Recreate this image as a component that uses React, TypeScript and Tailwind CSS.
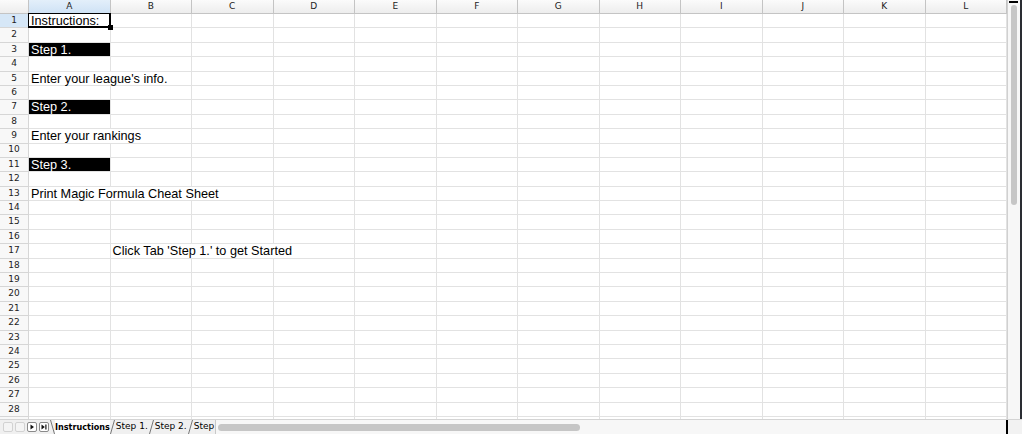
import React from 'react';

const COLS = ['A', 'B', 'C', 'D', 'E', 'F', 'G', 'H', 'I', 'J', 'K', 'L'];
const ROWS = Array.from({ length: 29 }, (_, i) => i + 1);

type Cell = { col: string; text: string; dark?: boolean };

const CELLS: Record<number, Cell> = {
  1: { col: 'A', text: 'Instructions:' },
  3: { col: 'A', text: 'Step 1.', dark: true },
  5: { col: 'A', text: "Enter your league's info." },
  7: { col: 'A', text: 'Step 2.', dark: true },
  9: { col: 'A', text: 'Enter your rankings' },
  11: { col: 'A', text: 'Step 3.', dark: true },
  13: { col: 'A', text: 'Print Magic Formula Cheat Sheet' },
  17: { col: 'B', text: "Click Tab 'Step 1.' to get Started" },
};

const cellFont = { fontFamily: '"Liberation Sans", Helvetica, Arial, sans-serif' };
const uiFont = { fontFamily: '"DejaVu Sans", "Lucida Grande", sans-serif' };

function NavButton({ active, children }: { active?: boolean; children?: React.ReactNode }) {
  return (
    <div
      className={`w-[10px] h-[10px] rounded-[2px] border flex items-center justify-center ${
        active ? 'border-[#8a8a8a] bg-white' : 'border-[#d2d2d2] bg-[#f4f4f4]'
      }`}
    >
      {children}
    </div>
  );
}

function Slant({ back }: { back?: boolean }) {
  return (
    <svg width="5" height="14" viewBox="0 0 5 14" className="shrink-0">
      <line x1={back ? 0.5 : 4.5} y1="0" x2={back ? 4.5 : 0.5} y2="14" stroke="#777" strokeWidth="1" />
    </svg>
  );
}

export default function App() {
  return (
    <div className="w-[1022px] h-[434px] flex flex-col bg-white overflow-hidden select-none">
      <div className="flex flex-1 min-h-0">
        {/* grid */}
        <div className="flex-1 min-w-0 overflow-hidden">
          {/* column headers */}
          <div className="flex h-[14px]" style={uiFont}>
            <div className="w-[29px] shrink-0 border-r border-b border-[#c4c4c4] bg-gradient-to-b from-[#fbfbfb] to-[#ededed]" />
            {COLS.map((c) => (
              <div
                key={c}
                className={`w-[81.5px] shrink-0 border-r border-b border-[#c4c4c4] flex items-center justify-center text-[9px] text-[#222] ${
                  c === 'A' ? 'bg-gradient-to-b from-[#e3effa] to-[#cfe2f5]' : 'bg-gradient-to-b from-[#fbfbfb] to-[#ededed]'
                }`}
              >
                {c}
              </div>
            ))}
          </div>

          {ROWS.map((r) => {
            const cell = CELLS[r];
            return (
              <div key={r} className="flex h-[14.4px]">
                <div
                  className={`w-[29px] shrink-0 border-r border-b border-[#d6d6d6] flex items-center justify-center text-[9px] text-[#222] ${
                    r === 1 ? 'bg-[#d6e7f7]' : 'bg-[#f8f8f8]'
                  }`}
                  style={uiFont}
                >
                  {r}
                </div>
                {COLS.map((c) => {
                  const here = cell && cell.col === c;
                  return (
                    <div
                      key={c}
                      className={`w-[81.5px] shrink-0 border-r border-b border-[#e2e2e2] relative ${
                        here && cell.dark ? 'bg-black' : ''
                      }`}
                    >
                      {here && (
                        <span
                          className={`relative z-10 block h-full w-max pl-[2px] pr-[1px] whitespace-nowrap text-[12.7px] leading-[15px] ${
                            cell.dark ? 'text-white bg-black' : 'text-black bg-white'
                          }`}
                          style={cellFont}
                        >
                          {cell.text}
                        </span>
                      )}
                      {r === 1 && c === 'A' && (
                        <div className="absolute -left-px -top-px -right-px -bottom-px border border-black border-r-2 border-b-2 z-20">
                          <div className="absolute -right-[4px] -bottom-[4px] w-[5px] h-[5px] bg-black" />
                        </div>
                      )}
                    </div>
                  );
                })}
              </div>
            );
          })}
        </div>

        {/* vertical scrollbar */}
        <div className="w-[15px] shrink-0 border-l border-[#d0d0d0] bg-[#f7f7f7] relative flex justify-center border-r-2 border-r-[#2a2d33]">
          <div className="absolute top-[1px] left-[1px] w-[9px] h-[2px] bg-black" />
          <div className="mt-[5px] w-[6px] h-[200px] rounded-full bg-[#c6c6c6]" />
        </div>
      </div>

      {/* sheet tabs */}
      <div className="h-[15px] shrink-0 flex items-center bg-[#f0f0f0] border-t border-[#d4d4d4]" style={uiFont}>
        <div className="flex items-center gap-[2px] pl-[3px]">
          <NavButton />
          <NavButton />
          <NavButton active>
            <svg width="6" height="6" viewBox="0 0 6 6">
              <path d="M1.5 0.5 L5 3 L1.5 5.5 Z" fill="#111" />
            </svg>
          </NavButton>
          <NavButton active>
            <svg width="6" height="6" viewBox="0 0 6 6">
              <path d="M0.5 0.5 L3.8 3 L0.5 5.5 Z" fill="#111" />
              <rect x="4.3" y="0.5" width="1.2" height="5" fill="#111" />
            </svg>
          </NavButton>
        </div>
        <div className="flex items-stretch h-full text-[9px] text-black ml-[1px]">
          <Slant back />
          <div className="bg-white flex items-center font-bold text-[8.1px]">Instructions</div>
          <Slant />
          <div className="px-[1px] flex items-center">Step 1.</div>
          <Slant />
          <div className="px-[1px] flex items-center">Step 2.</div>
          <Slant />
          <div className="px-[1px] flex items-center">Step</div>
        </div>
        <div className="flex-1 h-full flex items-center pl-[2px] pr-[5px] bg-[#f7f7f7] border-l border-[#c8c8c8]">
          <div className="w-[362px] h-[7px] rounded-full bg-[#c6c6c6]" />
        </div>
        <div className="w-[2px] h-full bg-black" />
        <div className="w-[14px] h-full bg-[#f2f2f2]" />
      </div>
    </div>
  );
}
